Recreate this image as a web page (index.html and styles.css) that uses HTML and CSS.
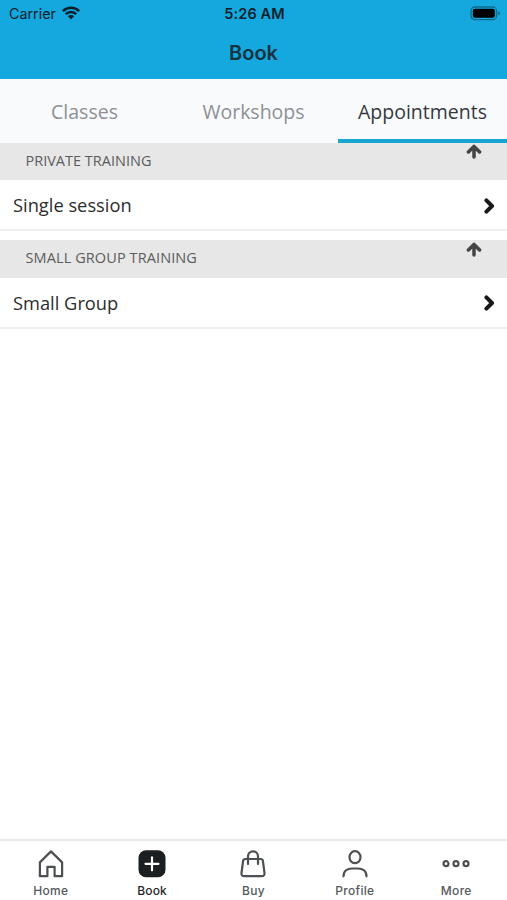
FILE: index.html
```html
<!DOCTYPE html>
<html lang="en">
<head>
<meta charset="utf-8">
<title>Book</title>
<link rel="stylesheet" href="styles.css">
</head>
<body>
<div class="app">
  <header class="header">
    <div class="status">
      <div class="carrier"><span>Carrier</span>
        <svg class="wifi" width="18" height="14" viewBox="0 0 18 14"><g fill="none" stroke="#06202b" stroke-width="2.6"><path d="M.9 5.1a11.5 11.5 0 0 1 16.2 0"/><path d="M3.8 8.2a7.4 7.4 0 0 1 10.4 0"/></g><path d="M5.9 10.3a4.4 4.4 0 0 1 6.2 0L9 13.6z" fill="#06202b"/></svg>
      </div>
      <span class="time">5:26 AM</span>
      <svg class="battery" width="31" height="15" viewBox="0 0 31 15"><rect x="1" y="1" width="25.5" height="12.6" rx="3.8" fill="none" stroke="#0c6b8c" stroke-width="1.3"/><rect x="2.8" y="2.8" width="22" height="9" rx="2.2" fill="#000"/><path d="M28.2 5v4.6q1.7-.8 1.7-2.3T28.2 5z" fill="#0c6b8c"/></svg>
    </div>
    <h1 class="title">Book</h1>
  </header>
  <nav class="tabs">
    <a class="tab">Classes</a>
    <a class="tab">Workshops</a>
    <a class="tab active">Appointments</a>
  </nav>
  <main class="content">
    <section class="group">
      <div class="group-head"><h2>PRIVATE TRAINING</h2><svg class="arrow" width="16" height="15" viewBox="0 0 16 15"><path d="M8 13V2.6M2.400 8L8 2.400 13.600 8"/></svg></div>
      <div class="row"><span>Single session</span><svg class="chevron" width="11" height="16" viewBox="0 0 11 16"><path d="M2.400 2.400L8 8l-5.600 5.600"/></svg></div>
    </section>
    <section class="group">
      <div class="group-head"><h2 class="wide">SMALL GROUP TRAINING</h2><svg class="arrow" width="16" height="15" viewBox="0 0 16 15"><path d="M8 13V2.6M2.400 8L8 2.400 13.600 8"/></svg></div>
      <div class="row"><span>Small Group</span><svg class="chevron" width="11" height="16" viewBox="0 0 11 16"><path d="M2.400 2.400L8 8l-5.600 5.600"/></svg></div>
    </section>
  </main>
  <footer class="bar">
    <a class="item"><svg width="28" height="28" viewBox="0 0 28 28"><path d="M2.9 26.2V12.4L14 1.4l11.1 11v13.8h-7.5v-9.4h-7.2v9.4z"/></svg><span>Home</span></a>
    <a class="item current"><svg width="28" height="28" viewBox="0 0 28 28"><rect x=".5" y=".3" width="27" height="27" rx="7.5" fill="#1b1f22" stroke="none"/><path d="M14 7.300v13M7.500 13.8h13" stroke="#fff"/></svg><span>Book</span></a>
    <a class="item"><svg width="28" height="28" viewBox="0 0 28 28"><path d="M6.200 9h15.600q1.800 0 2.100 1.800l1.600 12.200q.3 3.200-2.800 3.200H5.300q-3.100 0-2.800-3.200l1.600-12.200Q4.400 9 6.200 9zM9 14V6.300a5 5 0 0 1 10 0V14"/></svg><span>Buy</span></a>
    <a class="item"><svg width="28" height="28" viewBox="0 0 28 28"><ellipse cx="14" cy="7.200" rx="5.500" ry="6"/><path d="M2.500 26.300c0-5.200 4-7.800 8.500-7.800h6c4.500 0 8.500 2.600 8.500 7.800"/></svg><span>Profile</span></a>
    <a class="item"><svg width="28" height="28" viewBox="0 0 28 28"><circle cx="4" cy="13.700" r="2.500"/><circle cx="14" cy="13.700" r="2.500"/><circle cx="24" cy="13.700" r="2.500"/></svg><span>More</span></a>
  </footer>
</div>
</body>
</html>
```

FILE: styles.css
```css
* { box-sizing: border-box; }
body { margin: 0; background: #fff; }
.app { height: 900px; display: flex; flex-direction: column; font-family: "Open Sans", sans-serif; }
.header { height: 79px; background: #15a8de; font-family: Inter, sans-serif; flex: none; }
.status { height: 27px; display: grid; grid-template-columns: 1fr auto 1fr; align-items: center; padding: 0 7px 0 9px; }
.carrier { display: flex; align-items: center; gap: 6px; font-size: 14.3px; color: #06202b; }
.wifi { display: block; margin-top: -1px; }
.time { font-size: 14.5px; font-weight: 600; color: #06202b; letter-spacing: .1px; }
.battery { justify-self: end; margin-right: -1px; }
.title { margin: 0; height: 52px; line-height: 52px; text-align: center; font-size: 20px; font-weight: 600; color: #17323f; }
.tabs { height: 63.5px; flex: none; display: grid; grid-template-columns: repeat(3, 1fr); background: #f9fafc; }
.tab { font-size: 19.5px; line-height: 65px; text-align: center; color: #8d9095; height: 63.5px; }
.tab.active { color: #35383c; border-bottom: 4px solid #1ba5d3; }
.content { flex: 1; }
.group { margin-bottom: 9.2px; }
.group-head { height: 37.5px; background: #e7e7e7; padding: 0 25px 0 25.5px; display: flex; justify-content: space-between; align-items: flex-start; }
.group-head h2 { margin: 0; font-size: 14.5px; line-height: 36px; font-weight: 400; color: #5c5c5c; }
.group-head .wide { letter-spacing: .1px; }
.arrow { margin-top: 1.5px; fill: none; stroke: #444; stroke-width: 3.5; stroke-linecap: round; stroke-linejoin: round; }
.row { height: 51px; padding: 0 12px 0 13px; border-bottom: 2px solid #efefef; display: flex; justify-content: space-between; align-items: center; font-size: 18.3px; color: #2c2c2c; }
.chevron { margin-top: 2px; fill: none; stroke: #181818; stroke-width: 4; stroke-linecap: round; stroke-linejoin: round; }
.bar { height: 61px; flex: none; border-top: 2px solid #e9e9e9; display: grid; grid-template-columns: repeat(5, 1fr); font-family: Inter, sans-serif; }
.item { display: flex; flex-direction: column; align-items: center; padding-top: 9px; font-size: 12px; font-weight: 500; color: #55595c; }
.item svg { display: block; flex: none; fill: none; stroke: #4c5053; stroke-width: 2.2; stroke-linejoin: round; stroke-linecap: round; }
.item span { line-height: 14px; margin-top: 6px; letter-spacing: .3px; }
.current { color: #24282b; }
.current span { letter-spacing: .2px; }
```
